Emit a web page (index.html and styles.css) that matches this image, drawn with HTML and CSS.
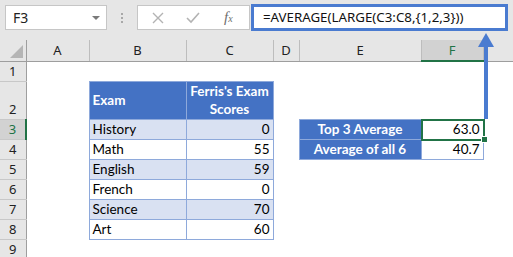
FILE: index.html
```html
<!DOCTYPE html>
<html lang="en">
  <head>
    <meta charset="UTF-8" />
    <title>AVERAGE LARGE</title>
    <link rel="stylesheet" href="styles.css">
  </head>
  <body>
    <div class="app">
      <div class="toolbar">
        <div class="namebox">
          <span>F3</span>
          <span class="caret"></span>
        </div>
        <div class="grip"><i></i><i></i><i></i></div>
        <div class="fx-buttons">
          <svg width="12" height="12" viewBox="0 0 12 12">
            <path d="M1 1 L11 11 M11 1 L1 11" stroke="#b3b3b3" stroke-width="1.4" fill="none" />
          </svg>
          <svg width="14" height="12" viewBox="0 0 14 12">
            <path d="M1 6 L5 10 L13 1" stroke="#b3b3b3" stroke-width="1.6" fill="none" />
          </svg>
          <span class="fx">f<sub>x</sub></span>
        </div>
        <div class="formula">=AVERAGE(LARGE(C3:C8,{1,2,3}))</div>
      </div>

      <table class="grid">
        <colgroup>
          <col class="col-hd"><col class="col-a"><col class="col-b"><col class="col-c">
          <col class="col-d"><col class="col-e"><col class="col-f"><col class="col-g">
        </colgroup>
        <thead>
          <tr class="head-row">
            <th class="corner"><span class="tri"></span></th>
            <th>A</th><th>B</th><th>C</th><th>D</th><th>E</th>
            <th class="sel-col">F</th><th class="last"></th>
          </tr>
        </thead>
        <tbody>
          <tr>
            <th class="rn">1</th>
            <td></td><td></td><td></td><td></td><td></td><td></td><td></td>
          </tr>
          <tr class="tall">
            <th class="rn bottom">2</th>
            <td></td>
            <td class="t hdr">Exam</td>
            <td class="t hdr center">Ferris's Exam<br>Scores</td>
            <td></td><td></td><td></td><td></td>
          </tr>
          <tr>
            <th class="rn sel-row">3</th>
            <td></td>
            <td class="t band">History</td>
            <td class="t band num">0</td>
            <td></td>
            <td class="t hdr center">Top 3 Average</td>
            <td class="t num active">63.0</td>
            <td></td>
          </tr>
          <tr>
            <th class="rn">4</th>
            <td></td>
            <td class="t">Math</td>
            <td class="t num">55</td>
            <td></td>
            <td class="t hdr center">Average of all 6</td>
            <td class="t num">40.7</td>
            <td></td>
          </tr>
          <tr>
            <th class="rn">5</th>
            <td></td>
            <td class="t band">English</td>
            <td class="t band num">59</td>
            <td></td><td></td><td></td><td></td>
          </tr>
          <tr>
            <th class="rn">6</th>
            <td></td>
            <td class="t">French</td>
            <td class="t num">0</td>
            <td></td><td></td><td></td><td></td>
          </tr>
          <tr>
            <th class="rn">7</th>
            <td></td>
            <td class="t band">Science</td>
            <td class="t band num">70</td>
            <td></td><td></td><td></td><td></td>
          </tr>
          <tr>
            <th class="rn">8</th>
            <td></td>
            <td class="t">Art</td>
            <td class="t num">60</td>
            <td></td><td></td><td></td><td></td>
          </tr>
          <tr>
            <th class="rn">9</th>
            <td></td><td></td><td></td><td></td><td></td><td></td><td></td>
          </tr>
        </tbody>
      </table>

      <svg class="arrow" width="513" height="257" viewBox="0 0 513 257">
        <line x1="486" y1="46" x2="486" y2="119" stroke="#4a7bd0" stroke-width="4" />
        <polygon points="478,47 486,33 494,47" fill="#4a7bd0" />
      </svg>
    </div>
  </body>
</html>
```

FILE: styles.css
```css
body {
  margin: 0;
  background: #ffffff;
}

.app {
  position: relative;
  width: 513px;
  height: 257px;
  overflow: hidden;
  font-family: 'Noto Sans', sans-serif;
}

/* formula bar */
.toolbar {
  display: flex;
  align-items: flex-start;
  height: 40px;
  box-sizing: border-box;
  padding: 5px 5px 0 5px;
  background: #e6e6e6;
}

.namebox {
  display: flex;
  align-items: center;
  justify-content: space-between;
  width: 102px;
  height: 25px;
  box-sizing: border-box;
  padding: 0 6px 0 7px;
  background: #ffffff;
  border: 1px solid #c6c6c6;
  font-size: 14px;
  color: #222222;
}

.caret {
  width: 0;
  height: 0;
  border-left: 4px solid transparent;
  border-right: 4px solid transparent;
  border-top: 4px solid #7a7a7a;
}

.grip {
  display: flex;
  flex-direction: column;
  gap: 2px;
  width: 30px;
  align-items: center;
  padding-top: 8px;
}

.grip i {
  width: 2px;
  height: 2px;
  background: #a8a8a8;
}

.fx-buttons {
  display: flex;
  align-items: center;
  width: 113px;
  height: 25px;
  box-sizing: border-box;
  padding: 0 10px 0 14px;
  gap: 22px;
  background: #ffffff;
  border: 1px solid #c6c6c6;
}

.fx {
  font-family: 'Liberation Serif', serif;
  font-style: italic;
  font-size: 15px;
  color: #6f6f6f;
  margin-left: 2px;
}

.fx sub {
  font-size: 10px;
  vertical-align: 0;
}

.formula {
  width: 257px;
  height: 27px;
  margin-top: -1px;
  margin-left: 1px;
  box-sizing: border-box;
  padding: 1px 0 0 9px;
  border: 3px solid #4a7bd0;
  background: #ffffff;
  font-size: 13.3px;
  line-height: 19px;
  color: #111111;
  white-space: nowrap;
}

/* sheet */
.grid {
  border-collapse: collapse;
  table-layout: fixed;
  width: 513px;
}

.col-hd { width: 26px; }
.col-a { width: 63px; }
.col-b { width: 97px; }
.col-c { width: 87px; }
.col-d { width: 26px; }
.col-e { width: 122px; }
.col-f { width: 62px; }
.col-g { width: 30px; }

.grid tr {
  height: 20px;
}

.grid tr.tall {
  height: 38px;
}

.grid td {
  padding: 0 3px;
  font-family: 'Lato', sans-serif;
  font-size: 13.5px;
  line-height: 18px;
  color: #000000;
  white-space: nowrap;
}

.head-row th {
  height: 20px;
  padding: 0;
  background: #e6e6e6;
  border-left: 1px solid #bdbdbd;
  border-bottom: 1px solid #9e9e9e;
  font-family: 'Noto Sans', sans-serif;
  font-size: 13px;
  font-weight: normal;
  color: #222222;
}

.head-row th.corner {
  position: relative;
  border-left: none;
  border-right: 1px solid #9e9e9e;
}

.tri {
  position: absolute;
  right: 3px;
  bottom: 3px;
  width: 0;
  height: 0;
  border-left: 13px solid transparent;
  border-bottom: 13px solid #b5b5b5;
}

.head-row th.sel-col {
  background: #d2d2d2;
  border-bottom: 2px solid #217346;
  color: #217346;
}

.grid th.rn {
  padding: 0;
  background: #e6e6e6;
  border-right: 1px solid #9e9e9e;
  border-bottom: 1px solid #c8c8c8;
  font-family: 'Noto Sans', sans-serif;
  font-size: 13px;
  font-weight: normal;
  color: #222222;
}

.grid th.rn.bottom {
  vertical-align: bottom;
  padding-bottom: 1px;
}

.grid th.rn.sel-row {
  background: #d2d2d2;
  border-right: 2px solid #217346;
  color: #217346;
}

.grid td.t {
  border: 1px solid #8ea9db;
}

.grid td.hdr {
  background: #4472c4;
  color: #ffffff;
  font-weight: bold;
}

.grid td.center {
  text-align: center;
  padding: 0 1px;
}

.grid td.band {
  background: #d9e1f2;
}

.grid td.num {
  text-align: right;
}

.grid td.active {
  position: relative;
}

.grid td.active::after {
  content: "";
  position: absolute;
  inset: -1px -2px -2px -1px;
  border: 2px solid #217346;
}

.grid td.active::before {
  content: "";
  position: absolute;
  right: -5px;
  bottom: -4px;
  width: 5px;
  height: 5px;
  background: #217346;
  border: 1px solid #ffffff;
  z-index: 1;
}

.arrow {
  position: absolute;
  left: 0;
  top: 0;
  pointer-events: none;
}
```
